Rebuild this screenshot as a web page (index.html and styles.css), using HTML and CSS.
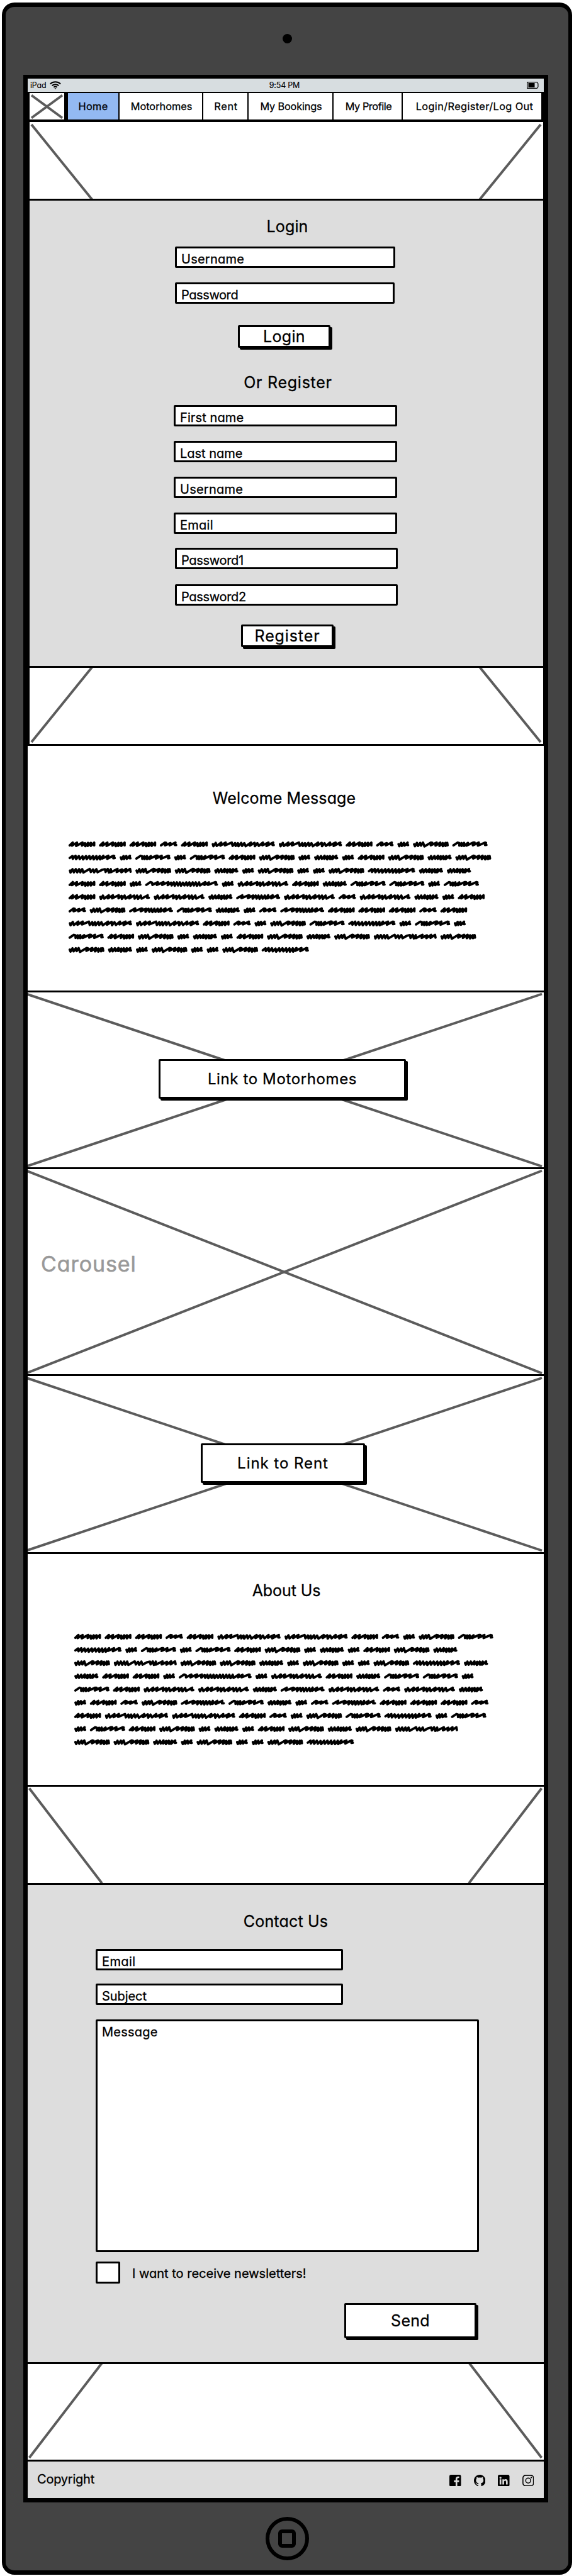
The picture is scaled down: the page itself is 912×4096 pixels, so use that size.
FILE: index.html
```html
<!DOCTYPE html>
<html lang="en">
<head>
<meta charset="utf-8">
<title>Motorhomes - Home</title>
<link rel="stylesheet" href="styles.css">
</head>
<body>
<div class="device">
  <div class="camera"></div>
  <div class="screen">
    <div class="status">
      <span class="carrier"><span class="t-ipad">iPad</span>
        <svg class="wifi" viewBox="0 0 18 13"><path d="M.8 4.5C5.200 .3 12.800 .3 17.200 4.500M3.700 7.200C6.600 4.500 11.400 4.500 14.300 7.200M6.300 9.800C7.900 8.500 10.100 8.500 11.700 9.800"/><path class="dot" d="M7.500 11.600Q9 10.900 10.500 11.600L9 13z"/></svg>
      </span>
      <span class="t-time">9:54 PM</span>
      <svg class="battery" viewBox="0 0 19 11"><path d="M.7 .7H16.200L17.900 3V8L16.200 10.300H.7Z" fill="none" stroke="#000" stroke-width="1.200"/><path d="M2.500 2h10v7h-10z"/></svg>
    </div>
    <nav class="nav">
      <div class="logo"><svg viewBox="0 0 55 42"><path d="M3 3.500L52 39.500M52 3.500L3 39.500"/></svg></div>
      <a class="tab tab-home">Home</a>
      <a class="tab tab-motorhomes">Motorhomes</a>
      <a class="tab tab-rent">Rent</a>
      <a class="tab tab-bookings">My Bookings</a>
      <a class="tab tab-profile">My Profile</a>
      <a class="tab tab-login">Login/Register/Log Out</a>
    </nav>

    <section class="photo photo-1 framed"><svg viewBox="0 0 817 122"><path d="M3 4L100 124M813 4L715.500 124"/></svg></section>

    <section class="panel panel-login framed">
      <h2 class="h-login">Login</h2>
      <div class="field f-a t-username">Username</div>
      <div class="field f-a f-a2 t-password">Password</div>
      <div class="btn btn-login">Login</div>
      <h2 class="h-register">Or Register</h2>
      <div class="field f-b f-first">First name</div>
      <div class="field f-b">Last name</div>
      <div class="field f-b t-username">Username</div>
      <div class="field f-b t-email">Email</div>
      <div class="field f-c">Password1</div>
      <div class="field f-c f-c2">Password2</div>
      <div class="btn btn-register">Register</div>
    </section>

    <section class="photo photo-2 framed"><svg viewBox="0 0 817 121"><path d="M100 -2L3 118M715.500 -2L813 118"/></svg></section>

    <section class="article article-welcome">
      <h2 class="h-welcome">Welcome Message</h2>
      <svg class="scribble" viewBox="0 0 3043 854" data-rows="AAABACCABDEF GDFDFAEDHDAEHE cEEHDEDDEGHH AADIDJAHFFDF AJJHKJBJHDA BEKFHDBKAAABA CCABDEFGDFD FAEDHDAEHEcE EHDEDDEG"></svg>
    </section>

    <section class="photo photo-3">
      <svg viewBox="0 0 820 278"><path d="M-2 2.500L817 276.500M817 2.500L-2 276.500"/></svg>
      <div class="btn btn-motorhomes">Link to Motorhomes</div>
    </section>
    <section class="photo photo-4">
      <svg viewBox="0 0 820 326"><path d="M-2 2.500L817 324.500M817 2.500L-2 324.500"/></svg>
      <div class="carousel">Carousel</div>
    </section>
    <section class="photo photo-5">
      <svg viewBox="0 0 820 280"><path d="M-2 3L817 277.500M817 3L-2 277.500"/></svg>
      <div class="btn btn-rent">Link to Rent</div>
    </section>

    <section class="article article-about">
      <h2 class="h-about">About Us</h2>
      <svg class="scribble" viewBox="0 0 3043 854" data-rows="AAABACCABDEF GDFDFAEDHDAEH EcEEHDEDDEGH HAADIDJAHFFD FAJJHKJBJH DABEKFHDBKAAAB ACCABDEFGDF DFAEDHDAEHEc EEHDEDDEG"></svg>
    </section>

    <section class="photo photo-6"><svg viewBox="0 0 820 153"><path d="M2.500 2.500L118 153.500M816.500 2.500L701 153.500"/></svg></section>

    <section class="panel panel-contact">
      <h2 class="h-contact">Contact Us</h2>
      <div class="field f-email">Email</div>
      <div class="field f-subject">Subject</div>
      <div class="field f-message">Message</div>
      <label class="check"><i class="box"></i><span>I want to receive newsletters!</span></label>
      <div class="btn btn-send">Send</div>
    </section>

    <section class="photo photo-7"><svg viewBox="0 0 820 152"><path d="M117.500 -1L2.500 149M702 -1L816.500 149"/></svg></section>

    <footer class="footer">
      <span class="t-copy">Copyright</span>
      <div class="social">
        <svg viewBox="0 0 84 84"><rect width="84" height="84" rx="11"/><path class="cut" d="M45 84V53H33V41H45V33C45 20 51 13 62 13H71V24H64C59 24 57 27 57 32V41H70V53H57V84Z"/></svg>
        <svg viewBox="0 0 16 16"><path d="M8 0C3.580 0 0 3.580 0 8c0 3.540 2.290 6.530 5.470 7.590.4.070.550-.170.550-.380 0-.190-.010-.820-.010-1.490-2.010.370-2.530-.490-2.690-.940-.090-.230-.480-.940-.820-1.130-.280-.150-.680-.520-.010-.530.630-.010 1.080.580 1.230.820.720 1.210 1.870.870 2.330.660.070-.520.280-.870.510-1.070-1.780-.2-3.640-.890-3.640-3.950 0-.870.310-1.590.820-2.150-.080-.2-.360-1.020.080-2.120 0 0 .670-.210 2.200.820.640-.180 1.320-.270 2-.270s1.360.090 2 .270c1.530-1.040 2.200-.820 2.200-.820.440 1.100.160 1.920.080 2.120.510.560.820 1.270.820 2.150 0 3.070-1.870 3.750-3.650 3.950.290.250.540.730.540 1.480 0 1.070-.010 1.930-.010 2.200 0 .210.150.460.550.380A8.010 8.010 0 0 0 16 8c0-4.420-3.580-8-8-8z"/></svg>
        <svg viewBox="0 0 84 84"><rect width="84" height="84" rx="11"/><g class="cut"><circle cx="19" cy="22" r="7.500"/><path d="M13 33H25V70H13ZM33 33H44V38C47 34 51 32 56 32C67 32 71 39 71 50V70H59V52C59 46 57 43 52 43C47 43 45 47 45 52V70H33Z"/></g></svg>
        <svg viewBox="0 0 84 84"><g fill="none" stroke="#000" stroke-width="7"><rect x="4" y="4" width="76" height="76" rx="19"/><circle cx="42" cy="42" r="18"/></g><circle cx="64" cy="20" r="5"/></svg>
      </div>
    </footer>
  </div>
  <div class="home"><i></i></div>
</div>
<script src="scribble.js"></script>
</body>
</html>
```
FILE: styles.css
```css
* { box-sizing: border-box; }
body { margin: 0; background: #fff; color: #000; font-family: Inter, "Liberation Sans", sans-serif; font-feature-settings: "cv11"; -webkit-text-stroke: .3px; }
svg { display: block; }

.device { margin: 4px 0 0 3px; width: 906px; height: 4090px; background: #444; border: solid #000; border-width: 7px 6px; border-radius: 20px; display: flex; flex-direction: column; }
.camera { width: 15px; height: 15px; border-radius: 50%; background: #000; margin: 43px 0 50px 439.500px; }
.screen { width: 834px; height: 3860px; margin-left: 28px; border: solid #000; border-width: 6px 7px 7px; background: #fff; flex: none; }
.home { width: 69px; height: 69px; border: 6.500px solid #000; border-radius: 50%; margin: 23px 0 0 412.500px; display: grid; place-items: center; flex: none; }
.home i { width: 28px; height: 29px; border: 6px solid #000; border-radius: 6px; }

.status { height: 21px; background: #d7dde0; display: grid; grid-template-columns: 1fr auto 1fr; align-items: center; padding: 0 8px 0 4px; font-size: 12.500px; line-height: 20px; letter-spacing: -.2px; -webkit-text-stroke-width: .1px; }
.carrier { display: flex; align-items: center; gap: 6px; }
.wifi { width: 18px; height: 13px; }
.wifi path { fill: none; stroke: #000; stroke-width: 2; }
.wifi .dot { fill: #000; stroke: none; }
.battery { width: 19px; height: 11px; justify-self: end; }

.nav { height: 48px; background: #000; padding: 2px 4px 4px 3px; display: flex; gap: 2px; }
.logo { width: 55px; background: #fff; margin-right: 4px; }
.logo svg { width: 55px; height: 42px; }
.logo path { fill: none; stroke: #5c5c5c; stroke-width: 4; }
.tab { background: #fff; display: flex; justify-content: center; align-items: center; font-size: 16.300px; line-height: 20px; white-space: nowrap; }
.tab-home { width: 80px; background: #93b9f2; letter-spacing: .39px; }
.tab-motorhomes { width: 131px; padding-left: 2px; }
.tab-rent { width: 70px; letter-spacing: .7px; padding-left: 2px; }
.tab-bookings { width: 133px; letter-spacing: -.16px; padding-left: 2px; }
.tab-profile { width: 108px; letter-spacing: -.42px; padding-left: 3px; }
.tab-login { flex: 1; padding-left: 8px; letter-spacing: .41px; }

.framed { border-left: 3px solid #000; border-right: 1px solid #000; }
.photo { background: #fff; border-bottom: 3px solid #000; display: grid; overflow: hidden; }
.photo > * { grid-area: 1 / 1; }
.photo > svg { width: 100%; height: 100%; }
.photo > svg path { fill: none; stroke: #5c5c5c; stroke-width: 3.900; }
.photo-1 { height: 125px; }
.photo-2 { height: 124px; }
.photo-3 { height: 281px; }
.photo-4 { height: 329px; }
.photo-5 { height: 283px; }
.photo-6 { height: 156px; }
.photo-7 { height: 155px; }
.carousel { color: #999; font-size: 34px; line-height: 40px; letter-spacing: .92px; margin: 131px 0 0 21px; -webkit-text-stroke-width: .6px; }

h2 { margin: 0; font-size: 25px; line-height: 30px; font-weight: 400; text-align: center; }
.panel { background: #ddd; border-bottom: 3px solid #000; }
.panel-login { height: 743px; padding-top: 26px; }
.panel-contact { height: 762px; padding-top: 43px; }
.h-login { padding-left: 3px; margin-bottom: 17px; letter-spacing: .17px; }
.h-register { padding-left: 5px; margin-top: 40px; letter-spacing: .74px; }
.h-welcome { padding-right: 5px; letter-spacing: .13px; }
.h-about { padding-left: 2px; letter-spacing: -.08px; }
.h-contact { letter-spacing: .18px; }

.field { height: 34px; background: #fff; border: 3px solid #000; border-radius: 2px; padding: 4.500px 0 0 7px; font-size: 20px; line-height: 24px; }
.f-a { width: 350px; margin-left: 231px; }
.f-a2 { width: 349px; margin-top: 23px; }
.f-b { width: 355px; margin: 23px 0 0 229px; }
.f-first { margin-top: 21px; letter-spacing: .11px; }
.f-c { width: 354px; margin: 22px 0 0 231px; letter-spacing: -.31px; }
.f-c2 { margin-top: 24px; }
.f-email { width: 393px; margin: 29px 0 0 108px; letter-spacing: .39px; }
.f-subject { width: 393px; margin: 21px 0 0 108px; letter-spacing: -.07px; }
.f-message { width: 609px; height: 370px; margin: 23px 0 0 108px; letter-spacing: .22px; }
.t-username, .t-email { letter-spacing: .25px; }
.t-password { letter-spacing: -.4px; }

.btn { background: #fff; border: 3px solid #000; border-radius: 2px; box-shadow: 3px 3px 0 #000; display: flex; align-items: center; justify-content: center; font-size: 25px; line-height: 28px; white-space: nowrap; }
.btn-login { width: 147px; height: 36px; margin: 34px 0 0 331px; letter-spacing: .32px; }
.btn-register { width: 147px; height: 36px; margin: 30px 0 0 336px; letter-spacing: .89px; }
.btn-motorhomes { width: 393px; height: 63px; margin: 106px 0 0 208px; font-size: 24px; letter-spacing: .62px; }
.btn-rent { width: 261px; height: 63px; margin: 107px 0 0 275px; font-size: 24px; letter-spacing: .95px; }
.btn-send { width: 210px; height: 56px; margin: 31px 0 0 503px; letter-spacing: .3px; }

.article { border-bottom: 3px solid #000; background: #fff; }
.article-welcome { height: 392px; padding-top: 68px; }
.article-about { height: 370px; padding-top: 43px; }
.scribble { width: 672px; height: 188.600px; margin: 47.500px 0 0 65px; overflow: visible; }
.article-about .scribble { margin-left: 73.500px; }
.scribble path { fill: none; stroke: #000; stroke-width: 17; stroke-linecap: round; stroke-linejoin: round; }

.check { display: flex; align-items: center; gap: 19px; margin: 15px 0 0 108px; height: 35px; font-size: 20px; line-height: 24px; }
.box { width: 39px; height: 35px; background: #fff; border: 3px solid #000; border-radius: 2px; }
.check span { padding-top: 3px; }

.footer { height: 58px; background: #ddd; display: flex; justify-content: space-between; padding: 16px 16px 0 15px; font-size: 20px; line-height: 24px; }
.t-copy { letter-spacing: -.22px; }
.social { display: flex; gap: 19.900px; padding-top: 4.700px; }
.social svg { width: 18.500px; height: 18.500px; }
.cut { fill: #ddd; }
```
FILE: scribble.js
```js
// Placeholder words: width and zigzag points of each shape.
const words = {
  A: [192, "8,8 30,-12 24,10 60,-12 54,12 100,-12 96,10 118,-8 120,14 140,-10 138,12 160,-10 160,12 184,-12 184,8"],
  B: [125, "8,8 36,-12 44,-10 36,8 76,-8 70,8 112,-12 108,6 117,6"],
  C: [456, "10,0 14,14 30,-10 38,12 70,-12 64,10 102,-12 96,8 146,-12 152,12 170,-8 174,12 190,-8 194,14 214,-10 220,12 236,-8 246,14 284,-12 276,10 310,-10 312,14 330,-8 340,12 370,-12 366,8 410,-12 396,12 444,-12 440,6 448,6"],
  c: [454, "10,0 14,14 28,-10 38,12 52,-10 62,12 76,-10 84,12 98,-10 106,14 152,-12 160,10 176,-8 184,12 200,-10 208,12 242,-6 262,-10 266,10 282,-12 290,14 304,-10 304,12 352,-12 346,10 384,-8 380,12 414,-12 410,10 442,-12 446,8"],
  D: [86, "9,0 14,14 28,-10 32,12 48,-10 52,10 74,-12 72,6 78,6"],
  E: [256, "8,0 14,14 28,-10 36,12 52,-10 58,10 72,-12 82,16 130,-12 138,-10 128,8 170,-12 162,10 196,-12 190,12 214,-8 214,14 234,-10 234,12 246,-10 249,8"],
  F: [252, "8,8 38,-12 50,-8 50,10 66,-8 66,12 84,-10 84,12 112,-10 102,10 150,-12 160,-12 148,8 190,-12 184,10 236,-12 242,-10 236,6 245,5"],
  G: [340, "8,4 28,-10 30,10 50,-12 54,12 74,-10 80,12 100,-8 104,14 126,-10 130,12 150,-10 156,12 176,-10 180,14 200,-10 204,14 224,-10 226,14 250,-12 242,8 286,-12 278,10 322,-12 328,-10 322,6 332,5"],
  H: [174, "9,0 14,12 26,-10 34,12 50,-10 56,10 76,-12 74,10 96,-8 94,14 114,-10 116,12 136,-10 130,12 160,-12 158,6 166,5"],
  I: [524, "8,8 38,-12 50,-8 52,8 90,-12 92,-8 84,8 132,-12 122,8 166,-12 162,10 186,-8 190,12 206,-10 212,14 228,-10 236,12 250,-10 258,14 272,-8 282,12 296,-10 304,12 318,-10 326,14 342,-10 350,12 364,-10 372,14 388,-10 394,12 432,-12 426,8 458,-10 452,8 506,-12 510,-10 506,6 516,5"],
  J: [366, "9,0 14,14 28,-10 38,12 70,-12 64,10 100,-12 94,10 142,-12 140,10 162,-8 164,14 184,-10 190,12 226,-12 218,10 252,-10 256,12 274,-10 280,14 300,-10 306,12 350,-12 346,6 358,5"],
  K: [316, "8,8 44,-12 38,8 90,-12 96,-10 84,8 122,-10 118,12 140,-10 146,12 160,-10 168,14 182,-10 190,12 206,-10 212,12 230,-12 226,10 262,-12 252,10 298,-12 296,6 308,5"]
};
const rowStep = 94.9;
const gap = 27;
for (const svg of document.querySelectorAll(".scribble")) {
  let d = "";
  svg.dataset.rows.split(" ").forEach((row, r) => {
    let x = 0;
    for (const key of row) {
      const [width, points] = words[key];
      d += "M" + points.split(" ").map(p => {
        const [px, py] = p.split(",").map(Number);
        return (x + px) + " " + (47 + r * rowStep + py).toFixed(1);
      }).join("L");
      x += width + gap;
    }
  });
  const path = document.createElementNS("http://www.w3.org/2000/svg", "path");
  path.setAttribute("d", d);
  svg.append(path);
}
```
